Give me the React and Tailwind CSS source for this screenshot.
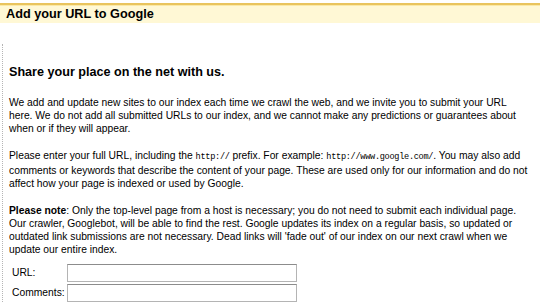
export default function App() {
  return (
    <div className="w-[540px] h-[303px] overflow-hidden bg-white text-black font-['Liberation_Sans',Arial,sans-serif]">
      {/* Title bar */}
      <div className="mt-[3px] border-t-2 border-[#e9c45e]">
        <div className="border-t border-[#fbe9a6] bg-[#fff8d5] h-[18px] pl-[6px] flex items-center">
          <h1 className="text-[12.7px] font-bold leading-none">Add your URL to Google</h1>
        </div>
      </div>

      {/* Content */}
      <div className="mt-[21px] ml-[2px] border-l border-dotted border-[#b5b5b5] pl-[6px] pt-[20px] pb-8">
        <h2 className="text-[12.6px] font-bold leading-[16px]">Share your place on the net with us.</h2>

        <p className="mt-[16px] text-[10.3px] leading-[13px] whitespace-nowrap">
          We add and update new sites to our index each time we crawl the web, and we invite you to submit your URL
          <br />
          here. We do not add all submitted URLs to our index, and we cannot make any predictions or guarantees about
          <br />
          when or if they will appear.
        </p>

        <p className="mt-[14px] text-[10.3px] leading-[13px] whitespace-nowrap">
          Please enter your full URL, including the <span className="font-['Liberation_Mono',monospace] text-[8.6px] tracking-[-0.3px]">http://</span> prefix. For example: <span className="font-['Liberation_Mono',monospace] text-[8.6px] tracking-[-0.3px]">http://www.google.com/</span>. You may also add
          <br />
          comments or keywords that describe the content of your page. These are used only for our information and do not
          <br />
          affect how your page is indexed or used by Google.
        </p>

        <p className="mt-[14px] text-[10.3px] leading-[13px] whitespace-nowrap">
          <b>Please note</b>: Only the top-level page from a host is necessary; you do not need to submit each individual page.
          <br />
          Our crawler, Googlebot, will be able to find the rest. Google updates its index on a regular basis, so updated or
          <br />
          outdated link submissions are not necessary. Dead links will 'fade out' of our index on our next crawl when we
          <br />
          update our entire index.
        </p>

        <form className="mt-[8px] flex flex-col gap-[2px] text-[10.3px]">
          <label className="flex items-center">
            <span className="w-[58px] pl-[3px]">URL:</span>
            <input type="text" className="w-[230px] h-[18px] border border-[#b4b4b4] border-t-[#8c8c8c] bg-white outline-none" />
          </label>
          <label className="flex items-center">
            <span className="w-[58px] pl-[3px]">Comments:</span>
            <input type="text" className="w-[230px] h-[18px] border border-[#b4b4b4] border-t-[#8c8c8c] bg-white outline-none" />
          </label>
        </form>
      </div>
    </div>
  );
}
